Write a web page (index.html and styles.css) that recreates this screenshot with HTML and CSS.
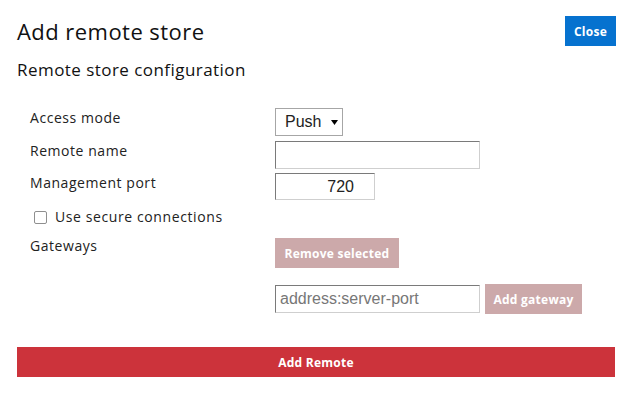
FILE: index.html
```html
<!DOCTYPE html>
<html>
<head>
<meta charset="utf-8">
<link rel="stylesheet" href="styles.css">
</head>
<body>
<div class="dialog">
  <div class="header">
    <h1 class="title">Add remote store</h1>
    <button class="btn btn-close">Close</button>
  </div>
  <h2 class="subtitle">Remote store configuration</h2>
  <div class="form">
    <div class="row row-1">
      <label class="label">Access mode</label>
      <div class="select"><span>Push</span><svg class="arrow" width="7" height="5" viewBox="0 0 7 5"><path d="M0 0H7L3.5 5Z" fill="#000"/></svg></div>
    </div>
    <div class="row row-2">
      <label class="label">Remote name</label>
      <input class="input input-wide" type="text">
    </div>
    <div class="row row-3">
      <label class="label">Management port</label>
      <input class="input input-port" type="text" value="720">
    </div>
    <div class="row row-check">
      <span class="checkbox"></span>
      <span class="check-label">Use secure connections</span>
    </div>
    <div class="row row-gw">
      <label class="label label-gw">Gateways</label>
      <button class="btn btn-muted btn-remove">Remove selected</button>
    </div>
    <div class="row row-add">
      <span class="label"></span>
      <input class="input input-wide" type="text" placeholder="address:server-port">
      <button class="btn btn-muted btn-addgw">Add gateway</button>
    </div>
  </div>
  <button class="btn btn-submit">Add Remote</button>
</div>
</body>
</html>
```
FILE: styles.css
```css
* { box-sizing: border-box; }
html, body { margin: 0; padding: 0; background: #fff; }
body {
  font-family: "Open Sans", "Noto Sans", sans-serif;
  color: #1a1a1a;
  width: 632px;
  height: 393px;
  overflow: hidden;
}
.dialog { padding: 16px 17px 0 17px; }
.header {
  display: flex;
  justify-content: space-between;
  align-items: flex-start;
  height: 42px;
}
.title {
  margin: 0;
  font-size: 22px;
  font-weight: 400;
  line-height: 30px;
  letter-spacing: 0.45px;
  color: #111;
}
.btn {
  border: none;
  font-family: "Open Sans", "Noto Sans", sans-serif;
  font-weight: 700;
  font-size: 12px;
  letter-spacing: 0.25px;
  color: #fff;
  padding: 0;
  cursor: pointer;
}
.btn-close {
  width: 51px;
  height: 30px;
  background: #0672cf;
  margin-right: -1px;
}
.subtitle {
  margin: 0;
  font-size: 17px;
  font-weight: 400;
  line-height: 24px;
  letter-spacing: 0.45px;
  color: #111;
}
.form { margin-top: 26px; }
.row {
  display: flex;
  align-items: flex-start;
}
.label {
  width: 258px;
  flex: none;
  padding-left: 13px;
  font-size: 14px;
  line-height: 20px;
  letter-spacing: 0.55px;
  color: #222;
}
.row-2 { margin-top: 5px; }
.row-3 { margin-top: 4px; }
.select {
  width: 68px;
  height: 28px;
  border: 1px solid #a6a6a6;
  display: flex;
  align-items: center;
  padding-left: 9px;
  font-family: "Liberation Sans", Arial, sans-serif;
  font-size: 16px;
  color: #222;
}
.arrow { margin-left: 10px; margin-top: 0; }
.input {
  height: 28px;
  border: 1px solid;
  border-color: #7a7a7a #cfcfcf #cfcfcf #7a7a7a;
  font-family: "Liberation Sans", Arial, sans-serif;
  font-size: 16px;
  color: #222;
  padding: 0 4px;
  outline: none;
  background: #fff;
}
.input::placeholder { color: #777; }
.input-wide { width: 205px; }
.input-port {
  width: 100px;
  height: 27px;
  text-align: right;
  padding-right: 20px;
}
.row-check {
  margin-top: 7px;
  height: 20px;
  align-items: center;
  padding-left: 17px;
}
.checkbox {
  width: 13px;
  height: 13px;
  border: 1px solid #8f8f8f;
  border-radius: 2px;
  background: #fff;
  flex: none;
}
.check-label {
  margin-left: 8px;
  font-size: 14px;
  line-height: 20px;
  letter-spacing: 0.6px;
  color: #222;
}
.row-gw { margin-top: 11px; }
.label-gw { margin-top: -2px; }
.btn-muted { background: #cca9aa; height: 30px; }
.btn-remove { width: 124px; }
.row-add { margin-top: 16px; align-items: center; }
.row-add .input { height: 28px; }
.btn-addgw { width: 97px; margin-left: 5px; }
.btn-submit {
  display: block;
  width: 598px;
  height: 30px;
  margin-top: 33px;
  background: #cc333b;
}
```
